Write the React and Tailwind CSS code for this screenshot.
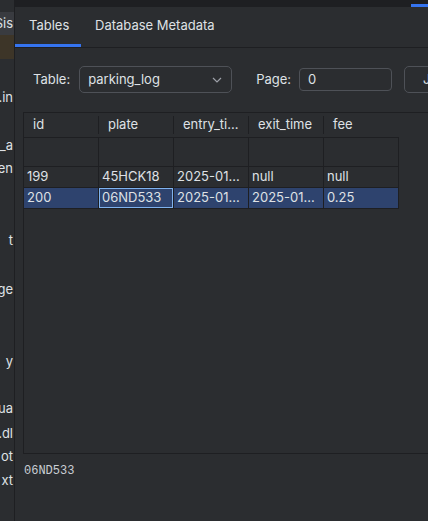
import React from 'react';

const columns = ['id', 'plate', 'entry_ti...', 'exit_time', 'fee'];

const rows = [
  { id: '199', plate: '45HCK18', entry: '2025-01...', exit: 'null', fee: 'null' },
  { id: '200', plate: '06ND533', entry: '2025-01...', exit: '2025-01...', fee: '0.25', selected: true },
];

const sideItems = [
  { text: 'Sis', cls: 'h-[23px] mt-[12px] bg-[#393b40]' },
  { text: '', cls: 'h-[24px] bg-[#3d3528]' },
  { text: '.in', cls: 'h-[24px] mt-[27px]' },
  { text: 'i_a', cls: 'h-[24px] mt-[24px]' },
  { text: 'en', cls: 'h-[24px] -mt-[1px]' },
  { text: 't', cls: 'h-[24px] mt-[48px]' },
  { text: 'ge', cls: 'h-[24px] mt-[25px]' },
  { text: 'y', cls: 'h-[24px] mt-[48px]' },
  { text: 'ua', cls: 'h-[24px] mt-[23px]' },
  { text: '.dl', cls: 'h-[24px] mt-[1px]' },
  { text: 'ot', cls: 'h-[24px] -mt-[1px]' },
  { text: 'xt', cls: 'h-[24px]' },
];

function Sidebar() {
  return (
    <div className="w-[15px] shrink-0 h-full border-r border-[#1e1f22] flex flex-col overflow-hidden">
      {sideItems.map((item, i) => (
        <div key={i} className={`${item.cls} flex items-center justify-end overflow-hidden whitespace-nowrap text-[13px] text-[#dfe1e5] pr-px`}>
          {item.text}
        </div>
      ))}
    </div>
  );
}

function App() {
  return (
    <div className="w-[428px] h-[521px] bg-[#2b2d30] flex overflow-hidden text-[#dfe1e5]" style={{ fontFamily: 'Inter, "Noto Sans", sans-serif' }}>
      <Sidebar />
      <div className="flex-1 min-w-0 flex flex-col">
        {/* strip from the window behind */}
        <div className="h-[7px] bg-[#1e1f22] flex justify-end">
          <div className="w-[17px] h-[3px] mt-[4px] bg-[#3574f0]" />
        </div>

        {/* tabs */}
        <div className="h-[41px] flex border-b border-[#1e1f22] text-[13px]">
          <div className="w-[66px] flex flex-col">
            <div className="flex-1 flex items-center pl-[14px] pt-px">Tables</div>
            <div className="h-[3px] bg-[#3574f0]" />
          </div>
          <div className="pl-[14px] flex items-center pb-[2px]">Database Metadata</div>
        </div>

        {/* controls */}
        <div className="flex items-center mt-[18px] pl-[18px] text-[13px] whitespace-nowrap">
          <span>Table:</span>
          <div className="ml-[9px] w-[153px] h-[27px] shrink-0 rounded-[5px] border border-[#4e5157] bg-[#2b2d30] flex items-center pl-[8px] pr-[9px]">
            <span className="flex-1">parking_log</span>
            <svg width="10" height="6" viewBox="0 0 10 6" fill="none" stroke="#9da0a8" strokeWidth="1.2">
              <path d="M1 1l4 4 4-4" />
            </svg>
          </div>
          <span className="ml-[24px]">Page:</span>
          <div className="ml-[8px] w-[93px] h-[23px] shrink-0 rounded-[4px] border border-[#4e5157] flex items-center pl-[8px]">0</div>
          <div className="ml-[12px] w-[70px] h-[27px] shrink-0 rounded-[5px] border border-[#4e5157] flex items-center pl-[18px]">Jump</div>
        </div>

        {/* table scroll pane */}
        <div className="ml-[8px] mt-[19px] h-[342px] border-t border-l border-b border-[#1e1f22] flex flex-col text-[13px]">
          <div className="flex h-[25px] shrink-0">
            <div className="flex border-b border-[#1e1f22]">
              {columns.map((c, i) => (
                <div key={c} className="w-[75px] h-full flex items-center pl-[9px] relative">
                  {c}
                  {i < columns.length - 1 && <div className="absolute right-0 top-[3px] bottom-[3px] w-px bg-[#1e1f22]" />}
                </div>
              ))}
            </div>
          </div>
          <div className="flex flex-col w-[375px]">
            <div className="flex h-[29px]">
              {columns.map(c => (
                <div key={c} className="w-[75px] border-r border-b border-[#1e1f22]" />
              ))}
            </div>
            {rows.map(r => (
              <div key={r.id} className={`flex h-[21px] ${r.selected ? 'bg-[#2e436e]' : ''}`}>
                {[r.id, r.plate, r.entry, r.exit, r.fee].map((v, i) => (
                  <div key={i} className="w-[75px] border-r border-b border-[#1e1f22] relative flex items-center pl-[3px] whitespace-nowrap">
                    {r.selected && i === 1 && <div className="absolute inset-0 border border-[#7fb2ee]" />}
                    {v}
                  </div>
                ))}
              </div>
            ))}
          </div>
        </div>

        <div className="pl-[9px] mt-[8px] text-[12px] text-[#c9cdd4]" style={{ fontFamily: '"Liberation Mono", monospace' }}>
          06ND533
        </div>
      </div>
    </div>
  );
}

export default App;
